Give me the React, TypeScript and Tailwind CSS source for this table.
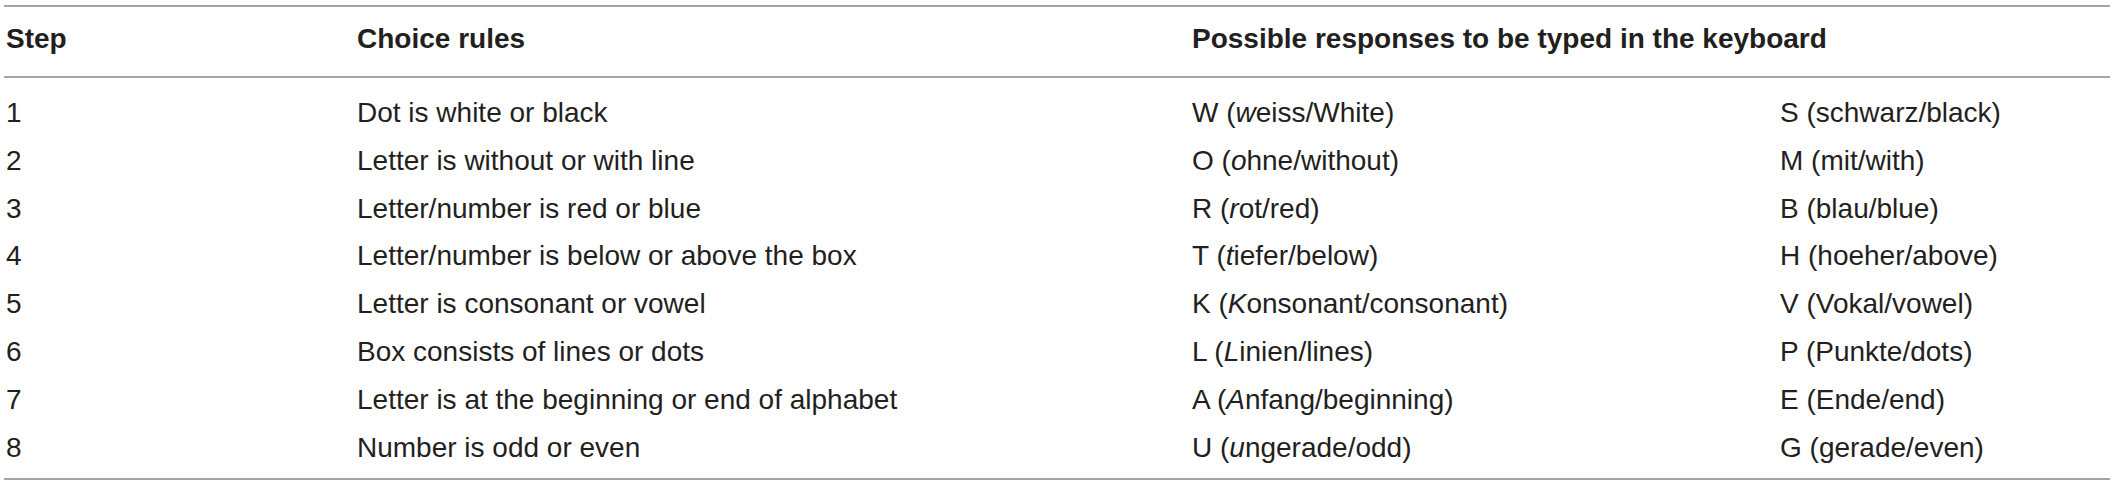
import React from "react";

type Row = {
  step: string;
  rule: string;
  a: [string, string, string];
  b: string;
};

const rows: Row[] = [
  { step: "1", rule: "Dot is white or black", a: ["W (", "w", "eiss/White)"], b: "S (schwarz/black)" },
  { step: "2", rule: "Letter is without or with line", a: ["O (", "o", "hne/without)"], b: "M (mit/with)" },
  { step: "3", rule: "Letter/number is red or blue", a: ["R (", "r", "ot/red)"], b: "B (blau/blue)" },
  { step: "4", rule: "Letter/number is below or above the box", a: ["T (", "t", "iefer/below)"], b: "H (hoeher/above)" },
  { step: "5", rule: "Letter is consonant or vowel", a: ["K (", "K", "onsonant/consonant)"], b: "V (Vokal/vowel)" },
  { step: "6", rule: "Box consists of lines or dots", a: ["L (", "L", "inien/lines)"], b: "P (Punkte/dots)" },
  { step: "7", rule: "Letter is at the beginning or end of alphabet", a: ["A (", "A", "nfang/beginning)"], b: "E (Ende/end)" },
  { step: "8", rule: "Number is odd or even", a: ["U (", "u", "ngerade/odd)"], b: "G (gerade/even)" },
];

const grid = "grid grid-cols-[351px_835px_588px_1fr] pl-[2px]";

export default function App() {
  return (
    <div className="w-[2117px] h-[485px] bg-white text-[#231f20] font-['Liberation_Sans',Arial,sans-serif] text-[28px]">
      <div className="ml-[4px] w-[2106px] pt-[5px]">
        <div className={`${grid} border-t-2 border-b-2 border-[#a4a4a4] pt-[16px] pb-[21px] leading-[32px] font-bold`}>
          <div>Step</div>
          <div>Choice rules</div>
          <div className="col-span-2">Possible responses to be typed in the keyboard</div>
        </div>
        <div className="border-b-2 border-[#a4a4a4] pt-[11px] pb-[7px] leading-[47.8px]">
          {rows.map((r) => (
            <div key={r.step} className={grid}>
              <div>{r.step}</div>
              <div>{r.rule}</div>
              <div>
                {r.a[0]}
                <span className="italic">{r.a[1]}</span>
                {r.a[2]}
              </div>
              <div>{r.b}</div>
            </div>
          ))}
        </div>
      </div>
    </div>
  );
}
